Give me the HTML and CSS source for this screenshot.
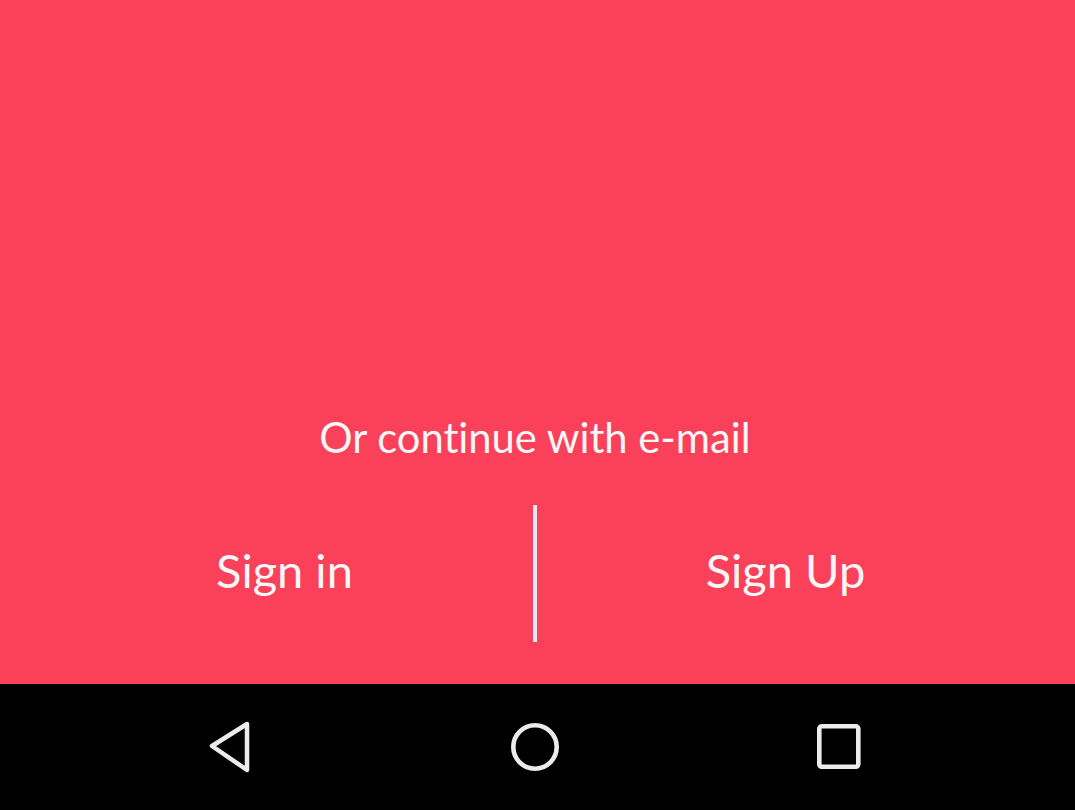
FILE: index.html
```html
<!DOCTYPE html>
<html lang="en">
<head>
<meta charset="utf-8">
<title>Sign in</title>
<link rel="stylesheet" href="styles.css">
</head>
<body>
<div class="screen">
  <main class="main">
    <p class="hint">Or continue with e-mail</p>
    <div class="actions">
      <button class="action">Sign in</button>
      <span class="divider"></span>
      <button class="action">Sign Up</button>
    </div>
  </main>
  <nav class="navbar">
    <div class="navcell">
      <svg class="icon" width="48" height="54" viewBox="0 0 48 54"><path d="M40 4 L5 26 L40 50 Z" fill="none" stroke="#ececec" stroke-width="4.5" stroke-linejoin="round"/></svg>
    </div>
    <div class="navcell">
      <svg class="icon" width="52" height="52" viewBox="0 0 52 52"><circle cx="26" cy="26" r="21.7" fill="none" stroke="#ececec" stroke-width="4.6"/></svg>
    </div>
    <div class="navcell">
      <svg class="icon" width="48" height="48" viewBox="0 0 48 48"><rect x="4.3" y="3.3" width="39" height="40.5" rx="2.5" fill="none" stroke="#ececec" stroke-width="4.6"/></svg>
    </div>
  </nav>
</div>
</body>
</html>
```
FILE: styles.css
```css
html, body {
  margin: 0;
  padding: 0;
}
body {
  background: #fb405a;
  font-family: Lato, "Open Sans", sans-serif;
}
.screen {
  width: 1075px;
  height: 810px;
  display: flex;
  flex-direction: column;
}
.main {
  flex: 1;
  display: flex;
  flex-direction: column;
  justify-content: flex-end;
  align-items: center;
  background: #fb405a;
  padding: 0 5px 42px 0;
}
.hint {
  margin: 0 0 44px 0;
  color: #fdf6f7;
  font-size: 41.7px;
  line-height: 48px;
  text-align: center;
  font-variant-ligatures: none;
}
.actions {
  display: flex;
  align-items: center;
  justify-content: center;
  width: 100%;
}
.action {
  width: 497px;
  background: none;
  border: 0;
  padding: 0 0 7px 0;
  color: #fdf6f7;
  font-family: Lato, "Open Sans", sans-serif;
  font-size: 47px;
  line-height: 56px;
  text-align: center;
}
.divider {
  width: 4px;
  height: 137px;
  background: #ebe5f0;
}
.navbar {
  height: 126px;
  background: #000;
  display: flex;
  justify-content: center;
  align-items: center;
  margin-left: -5px;
}
.navcell {
  width: 304px;
  display: flex;
  justify-content: center;
  align-items: center;
}
.icon {
  display: block;
}
```
